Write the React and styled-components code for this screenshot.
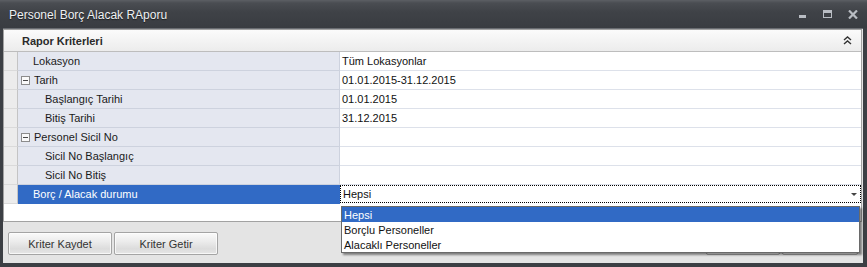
import React from "react";
import styled, { createGlobalStyle } from "styled-components";

const GlobalStyle = createGlobalStyle`
  html, body { margin: 0; padding: 0; background: #3c3f44; }
  body { font-family: "Liberation Sans", Arial, sans-serif; font-size: 11px; }
  * { box-sizing: border-box; }
`;

const Window = styled.div`
  width: 867px;
  height: 267px;
  display: flex;
  flex-direction: column;
  background: #3c3f44;
  padding-bottom: 4px;
  overflow: hidden;
`;

const TitleBar = styled.div`
  height: 28px;
  flex: none;
  display: flex;
  align-items: center;
  padding: 2px 2px 0 9px;
  background: linear-gradient(#5c5f64 0px, #4a4d52 3px, #3f4247 12px, #393c41 100%);
  color: #eef0f2;
  font-size: 12px;
  text-shadow: 0 1px 1px rgba(0, 0, 0, 0.6);
`;

const Title = styled.div`
  flex: 1;
`;

const WinButtons = styled.div`
  display: flex;
  align-items: center;
  margin-top: -2px;
`;

const WinButton = styled.div`
  width: 25px;
  height: 14px;
  display: flex;
  align-items: center;
  justify-content: center;
`;

const Body = styled.div`
  flex: 1;
  display: flex;
  flex-direction: column;
  margin: 0 4px 0 3px;
  border-top: 1px solid #696c71;
  background: #e4e4e4;
  position: relative;
`;

const Panel = styled.div`
  margin-right: 1px;
  border: 1px solid #a2a2a2;
  background: #ffffff;
  display: flex;
  flex-direction: column;
`;

const PanelHeader = styled.div`
  height: 22px;
  display: flex;
  align-items: center;
  justify-content: space-between;
  padding: 0 9px 0 18px;
  background: linear-gradient(#fbfbfb, #ececec);
  border-bottom: 1px solid #bdbdbd;
  font-weight: bold;
  color: #2a2a2a;
`;

const Grid = styled.div`
  display: grid;
  grid-template-columns: 14px 322px 1fr;
`;

const Indent = styled.div`
  height: 19px;
  background: #ececec;
  border-right: 1px solid #c4c4c4;
  border-bottom: 1px solid #dadada;
`;

const Label = styled.div`
  height: 19px;
  display: flex;
  align-items: center;
  gap: 4px;
  padding-left: ${(p) => (p.$level === 2 ? 27 : p.$category ? 3 : 15)}px;
  background: ${(p) => (p.$selected ? "#316ac5" : "#e4e7f0")};
  color: ${(p) => (p.$selected ? "#ffffff" : "#1a1a1a")};
  border-right: 1px solid ${(p) => (p.$selected ? "#316ac5" : "#cdd2de")};
  border-bottom: 1px solid ${(p) => (p.$selected ? "#316ac5" : "#cdd2de")};
`;

const Value = styled.div`
  height: 19px;
  display: flex;
  align-items: center;
  padding-left: 2px;
  background: #ffffff;
  color: #111;
  border-bottom: 1px solid ${(p) => (p.$plain ? "transparent" : "#dde1ea")};
  position: relative;
`;

const ExpandBox = styled.span`
  width: 9px;
  height: 9px;
  border: 1px solid #8c8c8c;
  background: #fafafa;
  position: relative;
  flex: none;
  &::after {
    content: "";
    position: absolute;
    left: 1px;
    right: 1px;
    top: 3px;
    height: 1px;
    background: #4a4a4a;
  }
`;

const Editor = styled.div`
  position: absolute;
  inset: 0;
  border: 1px dotted #000;
  display: flex;
  align-items: center;
  justify-content: space-between;
  padding: 0 3px 0 2px;
  background: #fff;
`;

const Arrow = styled.span`
  width: 0;
  height: 0;
  border-left: 3px solid transparent;
  border-right: 3px solid transparent;
  border-top: 3px solid #444;
  margin-top: 1px;
`;

const Popup = styled.div`
  position: absolute;
  top: 20px;
  left: 0px;
  width: 519px;
  border: 1px solid #6a6a6a;
  background: #fff;
  box-shadow: 2px 2px 2px rgba(0, 0, 0, 0.45);
  z-index: 10;
`;

const PopupItem = styled.div`
  height: 15px;
  display: flex;
  align-items: center;
  padding-left: 2px;
  background: ${(p) => (p.$active ? "#316ac5" : "#fff")};
  color: ${(p) => (p.$active ? "#fff" : "#111")};
`;

const Filler = styled.div`
  height: 17px;
  background: #fff;
`;

const Footer = styled.div`
  flex: 1;
  display: flex;
  justify-content: space-between;
  align-items: flex-start;
  padding: 10px 5px 0 5px;
`;

const ButtonGroup = styled.div`
  display: flex;
  gap: 2px;
`;

const Button = styled.button`
  width: ${(p) => p.$w}px;
  height: 23px;
  padding: 0;
  border: 1px solid #a4a4a4;
  border-radius: 2px;
  background: linear-gradient(#fafafa 0%, #ececec 40%, #dcdcdc 75%, #e6e6e6 100%);
  box-shadow: inset 0 0 0 1px rgba(255, 255, 255, 0.7);
  font-family: "Liberation Sans", Arial, sans-serif;
  font-size: 11px;
  color: #333;
`;

const rows = [
  { label: "Lokasyon", value: "Tüm Lokasyonlar" },
  { label: "Tarih", value: "01.01.2015-31.12.2015", category: true },
  { label: "Başlangıç Tarihi", value: "01.01.2015", level: 2 },
  { label: "Bitiş Tarihi", value: "31.12.2015", level: 2 },
  { label: "Personel Sicil No", value: "", category: true },
  { label: "Sicil No Başlangıç", value: "", level: 2 },
  { label: "Sicil No Bitiş", value: "", level: 2 },
  { label: "Borç / Alacak durumu", value: "Hepsi", selected: true },
];

const options = ["Hepsi", "Borçlu Personeller", "Alacaklı Personeller"];

export default function App() {
  return (
    <>
      <GlobalStyle />
      <Window>
        <TitleBar>
          <Title>Personel Borç Alacak RAporu</Title>
          <WinButtons>
            <WinButton>
              <svg width="8" height="8" viewBox="0 0 8 8">
                <rect x="0" y="5" width="7" height="3" fill="#b9bdc3" />
              </svg>
            </WinButton>
            <WinButton>
              <svg width="10" height="9" viewBox="0 0 10 9">
                <rect x="0.5" y="0.5" width="8" height="7" fill="none" stroke="#b9bdc3" />
                <rect x="0" y="0" width="9" height="3" fill="#b9bdc3" />
              </svg>
            </WinButton>
            <WinButton>
              <svg width="10" height="9" viewBox="0 0 10 9">
                <path d="M1 0.5 L9 8.5 M9 0.5 L1 8.5" stroke="#b9bdc3" strokeWidth="2.2" />
              </svg>
            </WinButton>
          </WinButtons>
        </TitleBar>
        <Body>
          <Panel>
            <PanelHeader>
              <span>Rapor Kriterleri</span>
              <svg width="9" height="9" viewBox="0 0 9 9">
                <path d="M1 4 L4.5 1 L8 4 M1 8 L4.5 5 L8 8" fill="none" stroke="#333" strokeWidth="1.4" />
              </svg>
            </PanelHeader>
            <Grid>
              {rows.map((r) => (
                <React.Fragment key={r.label}>
                  <Indent />
                  <Label $level={r.level} $category={r.category} $selected={r.selected}>
                    {r.category && <ExpandBox />}
                    {r.label}
                  </Label>
                  <Value $plain={r.selected}>
                    {r.selected ? (
                      <Editor>
                        <span>{r.value}</span>
                        <Arrow />
                        <Popup>
                          {options.map((o, i) => (
                            <PopupItem key={o} $active={i === 0}>
                              {o}
                            </PopupItem>
                          ))}
                        </Popup>
                      </Editor>
                    ) : (
                      r.value
                    )}
                  </Value>
                </React.Fragment>
              ))}
            </Grid>
            <Filler />
          </Panel>
          <Footer>
            <ButtonGroup>
              <Button $w={104}>Kriter Kaydet</Button>
              <Button $w={104}>Kriter Getir</Button>
            </ButtonGroup>
            <ButtonGroup>
              <Button $w={74}>Raporla</Button>
              <Button $w={76}>Kapat</Button>
            </ButtonGroup>
          </Footer>
        </Body>
      </Window>
    </>
  );
}
